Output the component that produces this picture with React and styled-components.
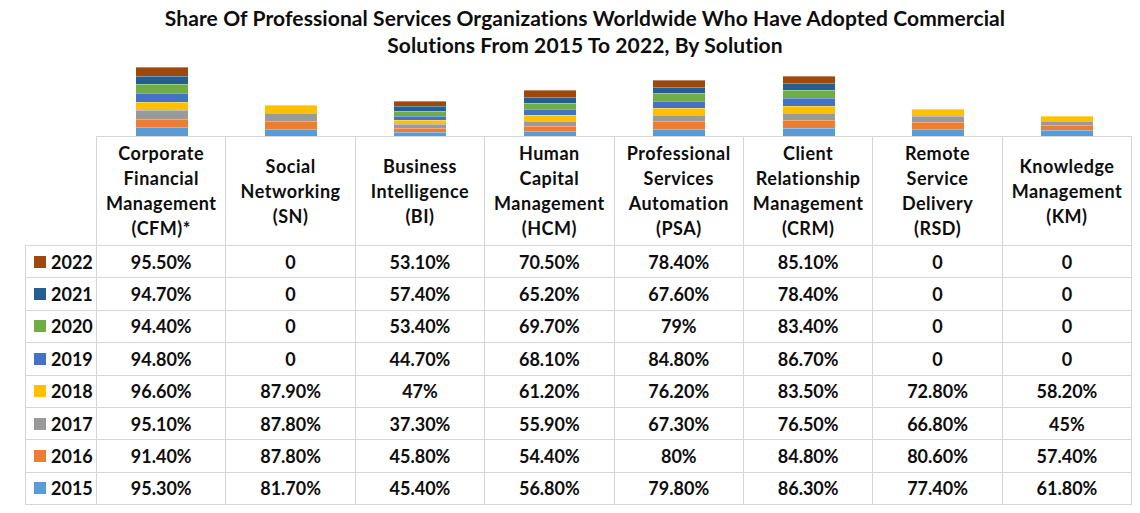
import React from 'react';
import styled, { createGlobalStyle, css } from 'styled-components';

const GlobalStyle = createGlobalStyle`
  html, body {
    margin: 0;
    padding: 0;
    background: #ffffff;
  }
  body {
    font-family: Lato, "Liberation Sans", sans-serif;
    color: #0d0d0d;
  }
`;

const YEARS = [
  { year: 2022, color: '#9E480E' },
  { year: 2021, color: '#255E91' },
  { year: 2020, color: '#70AD47' },
  { year: 2019, color: '#4472C4' },
  { year: 2018, color: '#FFC000' },
  { year: 2017, color: '#A5A5A5', dotted: true },
  { year: 2016, color: '#ED7D31' },
  { year: 2015, color: '#5B9BD5' },
];

// values listed 2022 -> 2015
const SOLUTIONS = [
  { name: ['Corporate', 'Financial', 'Management', '(CFM)*'], values: ['95.50%', '94.70%', '94.40%', '94.80%', '96.60%', '95.10%', '91.40%', '95.30%'] },
  { name: ['Social', 'Networking', '(SN)'], values: ['0', '0', '0', '0', '87.90%', '87.80%', '87.80%', '81.70%'] },
  { name: ['Business', 'Intelligence', '(BI)'], values: ['53.10%', '57.40%', '53.40%', '44.70%', '47%', '37.30%', '45.80%', '45.40%'] },
  { name: ['Human', 'Capital', 'Management', '(HCM)'], values: ['70.50%', '65.20%', '69.70%', '68.10%', '61.20%', '55.90%', '54.40%', '56.80%'] },
  { name: ['Professional', 'Services', 'Automation', '(PSA)'], values: ['78.40%', '67.60%', '79%', '84.80%', '76.20%', '67.30%', '80%', '79.80%'] },
  { name: ['Client', 'Relationship', 'Management', '(CRM)'], values: ['85.10%', '78.40%', '83.40%', '86.70%', '83.50%', '76.50%', '84.80%', '86.30%'] },
  { name: ['Remote', 'Service', 'Delivery', '(RSD)'], values: ['0', '0', '0', '0', '72.80%', '66.80%', '80.60%', '77.40%'] },
  { name: ['Knowledge', 'Management', '(KM)'], values: ['0', '0', '0', '0', '58.20%', '45%', '57.40%', '61.80%'] },
];

const PX_PER_PCT = 69 / 757.8;

const Page = styled.div`
  width: 1140px;
  height: 513px;
  display: flex;
  flex-direction: column;
  overflow: hidden;
`;

const Title = styled.h1`
  margin: 0;
  height: 60px;
  padding: 4px 0 0 30px;
  box-sizing: border-box;
  text-align: center;
  font-size: 21px;
  line-height: 27px;
  font-weight: 700;
  letter-spacing: 0.1px;
`;

const Grid = styled.div`
  margin-left: 25px;
  display: grid;
  grid-template-columns: 72px repeat(8, 129.4px);
  grid-template-rows: 76px 110px repeat(8, 32.4px);
`;

const BarSlot = styled.div`
  display: flex;
  justify-content: center;
  align-items: flex-end;
`;

const Bar = styled.div`
  width: 52px;
  display: flex;
  flex-direction: column;
`;

const dots = css`
  background-image: radial-gradient(#8c8c8c 0.6px, transparent 0.8px);
  background-size: 2px 2px;
`;

const Segment = styled.div`
  background-color: ${(p) => p.$color};
  border-top: 1px solid rgba(255, 255, 255, 0.35);
  box-sizing: border-box;
  ${(p) => p.$dotted && dots}
`;

const cellBorder = '1px solid #d6d6d6';

const Cell = styled.div`
  display: flex;
  align-items: center;
  justify-content: center;
  text-align: center;
  font-weight: 700;
  font-size: 18px;
  border-right: ${cellBorder};
  border-bottom: ${cellBorder};
  ${(p) => p.$top && css`border-top: ${cellBorder};`}
  ${(p) => p.$left && css`border-left: ${cellBorder};`}
`;

const Corner = styled.div`
  border-right: ${cellBorder};
  border-bottom: ${cellBorder};
`;

const HeaderText = styled.div`
  line-height: 25px;
  letter-spacing: 0.5px;
`;

const LegendCell = styled(Cell)`
  justify-content: flex-start;
  padding-left: 8px;
  gap: 5px;
`;

const Swatch = styled.span`
  width: 12px;
  height: 12px;
  background-color: ${(p) => p.$color};
  ${(p) => p.$dotted && dots}
`;

const toNum = (v) => parseFloat(v) || 0;

export default function App() {
  return (
    <Page>
      <GlobalStyle />
      <Title>
        Share Of Professional Services Organizations Worldwide Who Have Adopted Commercial
        <br />
        Solutions From 2015 To 2022, By Solution
      </Title>
      <Grid>
        <div />
        {SOLUTIONS.map((s) => (
          <BarSlot key={s.name.join(' ')}>
            <Bar>
              {YEARS.map((y, i) => {
                const v = toNum(s.values[i]);
                if (!v) return null;
                return (
                  <Segment
                    key={y.year}
                    $color={y.color}
                    $dotted={y.dotted}
                    style={{ height: `${v * PX_PER_PCT}px` }}
                  />
                );
              })}
            </Bar>
          </BarSlot>
        ))}

        <Corner />
        {SOLUTIONS.map((s) => (
          <Cell key={s.name.join(' ')} $top>
            <HeaderText>
              {s.name.map((line) => (
                <div key={line}>{line}</div>
              ))}
            </HeaderText>
          </Cell>
        ))}

        {YEARS.map((y, i) => (
          <React.Fragment key={y.year}>
            <LegendCell $left>
              <Swatch $color={y.color} $dotted={y.dotted} />
              {y.year}
            </LegendCell>
            {SOLUTIONS.map((s) => (
              <Cell key={s.name.join(' ')}>{s.values[i]}</Cell>
            ))}
          </React.Fragment>
        ))}
      </Grid>
    </Page>
  );
}
